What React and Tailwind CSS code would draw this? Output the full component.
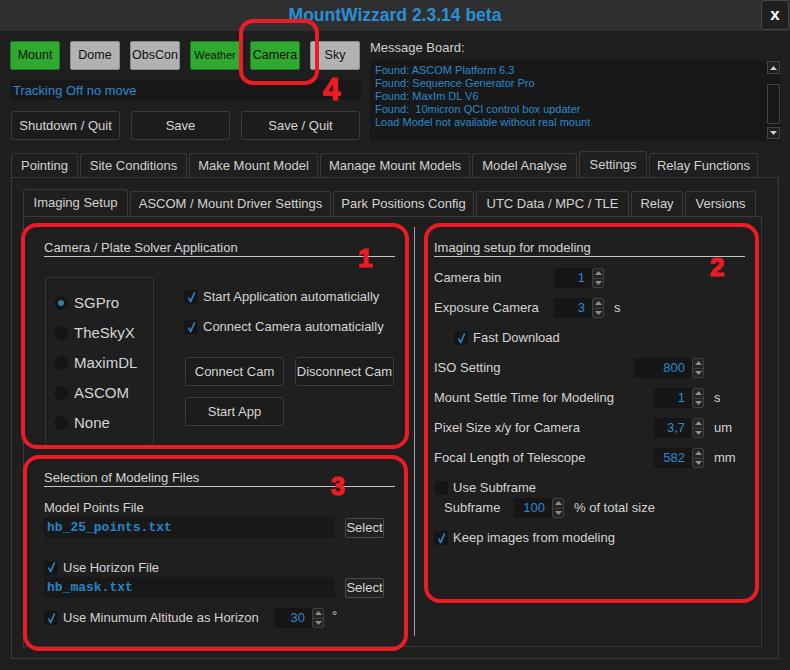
import React from "react";

const F = "font-['Liberation_Sans',Arial,sans-serif]";

function CheckMark() {
  return (
    <svg width="9" height="11" viewBox="0 0 9 11">
      <path d="M1.8 6.2 L3.6 9.6 L7.4 1" stroke="#2a86c8" strokeWidth="1.7" fill="none" strokeLinecap="round" strokeLinejoin="round" />
    </svg>
  );
}

function Check({ checked = true }) {
  return (
    <div className="w-[14px] h-[14px] shrink-0 bg-[#151515] rounded-[2px] flex items-center justify-center">
      {checked && <CheckMark />}
    </div>
  );
}

function CheckRow({ text, className = "" }) {
  return (
    <div className={`flex items-center h-[20px] ${className}`}>
      <Check />
      <span className="ml-[5px] text-[13px] leading-[16px] text-[#d4d4d4] whitespace-nowrap">{text}</span>
    </div>
  );
}

function Arrows() {
  return (
    <div className="w-[12px] h-full shrink-0 border border-[#404040] rounded-[2px] bg-[#242424] flex flex-col">
      <div className="flex-1 flex items-center justify-center border-b border-[#404040]">
        <svg width="7" height="4" viewBox="0 0 7 4">
          <path d="M0 4 L3.5 0 L7 4 Z" fill="#8e8e8e" />
        </svg>
      </div>
      <div className="flex-1 flex items-center justify-center">
        <svg width="7" height="4" viewBox="0 0 7 4">
          <path d="M0 0 L3.5 4 L7 0 Z" fill="#8e8e8e" />
        </svg>
      </div>
    </div>
  );
}

function Spin({ value, w }) {
  return (
    <div className={`flex h-[20px] shrink-0 rounded-[3px] bg-[#161616] ${w}`}>
      <div className="flex-1 text-right pr-[7px] text-[#2a8ad0] text-[13px] leading-[20px]">{value}</div>
      <Arrows />
    </div>
  );
}

function Radio({ label, selected }) {
  return (
    <div className="h-[30px] flex items-center">
      <div className="w-[14px] h-[14px] rounded-full bg-[#151515] flex items-center justify-center">
        {selected && <div className="w-[6px] h-[6px] rounded-full bg-[#2a7fae]" />}
      </div>
      <span className="ml-[6px] text-[15px] text-[#d4d4d4]">{label}</span>
    </div>
  );
}

function Header({ children }) {
  return (
    <div className="border-b border-[#c4c4c4] text-[13px] leading-[16px] text-[#d4d4d4] whitespace-nowrap">{children}</div>
  );
}

function DarkBtn({ children, w, className = "" }) {
  return (
    <div className={`h-[29px] ${w} bg-[#1c1c1c] border border-[#3c3c3c] rounded-[3px] flex items-center justify-center pt-[1px] text-[13px] text-[#d6d6d6] whitespace-nowrap ${className}`}>
      {children}
    </div>
  );
}

function TopBtn({ children, green, small }) {
  return (
    <div
      className={`w-[50px] h-[29px] rounded-[2px] border flex items-center justify-center text-[#111] ${
        small ? "text-[11px]" : "text-[12.5px]"
      } ${green ? "bg-[#2fa92f] border-[#1f7a1f]" : "bg-[#b2b2b2] border-[#8a8a8a]"}`}
    >
      {children}
    </div>
  );
}

function Tab({ children, w, active }) {
  return (
    <div
      className={`${w} ${active ? "h-[26px]" : "h-[24px]"} border border-b-0 border-[#3a3a3a] rounded-t-[3px] bg-[#1f1f1f] flex items-center justify-center text-[13px] text-[#d2d2d2] whitespace-nowrap`}
    >
      {children}
    </div>
  );
}

function SubTab({ children, w, active }) {
  return (
    <div
      className={`${w} ${active ? "h-[27px]" : "h-[25px]"} border border-b-0 border-[#3a3a3a] rounded-t-[3px] bg-[#1f1f1f] flex items-center justify-center text-[13px] text-[#d2d2d2] whitespace-nowrap`}
    >
      {children}
    </div>
  );
}

function FileInput({ text }) {
  return (
    <div className="h-[21px] w-[291px] bg-[#181818] rounded-[2px] pl-[3px] font-['Liberation_Mono',monospace] font-bold text-[13px] leading-[21px] text-[#2585c4]">
      {text}
    </div>
  );
}

function SelectBtn() {
  return (
    <div className="ml-[10px] mt-[1px] w-[39px] h-[20px] bg-[#222] border border-[#4a4a4a] rounded-[2px] flex items-center justify-center text-[13px] text-[#d8d8d8]">
      Select
    </div>
  );
}

const digit = "absolute font-bold leading-none text-[#ed1c24] [-webkit-text-stroke:1.2px_#ed1c24]";

export default function App() {
  return (
    <div className={`w-[790px] h-[670px] bg-[#1f1f1f] relative overflow-hidden ${F} text-[#d4d4d4]`}>
      {/* Title bar */}
      <div className="h-[31px] bg-[#2f2f2f] grid grid-cols-[1fr_auto_1fr] items-start">
        <div />
        <div className="text-[17.5px] font-bold text-[#2a8fd6] leading-[31px]">MountWizzard 2.3.14 beta</div>
        <div className="flex justify-end pr-[1px]">
          <div className="w-[28px] h-[30px] bg-[#1f1f1f] border border-[#454545] rounded-[3px] flex items-center justify-center text-white font-bold text-[17px] leading-none pb-[2px]">
            x
          </div>
        </div>
      </div>

      {/* Top section */}
      <div className="flex pl-[10px]">
        <div className="w-[351px] flex flex-col">
          <div className="flex gap-[10px] mt-[10px]">
            <TopBtn green>Mount</TopBtn>
            <TopBtn>Dome</TopBtn>
            <TopBtn>ObsCon</TopBtn>
            <TopBtn green small>Weather</TopBtn>
            <TopBtn green>Camera</TopBtn>
            <TopBtn>Sky</TopBtn>
          </div>
          <div className="mt-[10px] h-[20px] bg-[#181818] rounded-[2px] pl-[3px] pt-[1px] text-[13px] leading-[20px] text-[#2a8ad0]">
            Tracking Off no move
          </div>
          <div className="flex mt-[11px] ml-[1px] gap-[11px]">
            <DarkBtn w="w-[109px]">Shutdown / Quit</DarkBtn>
            <DarkBtn w="w-[99px]">Save</DarkBtn>
            <DarkBtn w="w-[119px]">Save / Quit</DarkBtn>
          </div>
        </div>
        <div className="ml-[9px] w-[411px] flex flex-col pt-[9px]">
          <div className="text-[13px] leading-[16px] text-[#d0d0d0]">Message Board:</div>
          <div className="mt-[4px] h-[81px] bg-[#181818] flex">
            <div className="flex-1 pl-[5px] pt-[4px] text-[11px] leading-[13px] text-[#2a8acb] whitespace-nowrap">
              <div>Found: ASCOM Platform 6.3</div>
              <div>Found: Sequence Generator Pro</div>
              <div>Found: MaxIm DL V6</div>
              <div>Found:&nbsp; 10micron QCI control box updater</div>
              <div>Load Model not available without real mount</div>
            </div>
            <div className="w-[13px] mr-[1px] flex flex-col">
              <div className="mt-[1px] h-[13px] border border-[#444] bg-[#202020] flex items-center justify-center">
                <svg width="7" height="4" viewBox="0 0 7 4">
                  <path d="M0 4 L3.5 0 L7 4 Z" fill="#cfcfcf" />
                </svg>
              </div>
              <div className="mt-[10px] h-[40px] border border-[#444] rounded-[1px]" />
              <div className="mt-[3px] h-[12px] border border-[#444] bg-[#202020] flex items-center justify-center">
                <svg width="7" height="4" viewBox="0 0 7 4">
                  <path d="M0 0 L3.5 4 L7 0 Z" fill="#cfcfcf" />
                </svg>
              </div>
            </div>
          </div>
        </div>
      </div>

      {/* Main tabs */}
      <div className="mt-[10px] ml-[11px] flex items-end gap-[2px] h-[26px]">
        <Tab w="w-[67px]">Pointing</Tab>
        <Tab w="w-[107px]">Site Conditions</Tab>
        <Tab w="w-[129px]">Make Mount Model</Tab>
        <Tab w="w-[150px]">Manage Mount Models</Tab>
        <Tab w="w-[105px]">Model Analyse</Tab>
        <Tab w="w-[68px]" active>Settings</Tab>
        <Tab w="w-[109px]">Relay Functions</Tab>
      </div>

      {/* Main pane */}
      <div className="ml-[11px] w-[768px] h-[482px] border border-[#3a3a3a] px-[11px] pt-[11px]">
        <div className="flex items-end gap-[2px] h-[27px]">
          <SubTab w="w-[105px]" active>Imaging Setup</SubTab>
          <SubTab w="w-[201px]">ASCOM / Mount Driver Settings</SubTab>
          <SubTab w="w-[141px]">Park Positions Config</SubTab>
          <SubTab w="w-[153px]">UTC Data / MPC / TLE</SubTab>
          <SubTab w="w-[52px]">Relay</SubTab>
          <SubTab w="w-[71px]">Versions</SubTab>
        </div>

        <div className="w-[739px] h-[431px] border border-[#3a3a3a] flex">
          {/* Left column */}
          <div className="w-[390px] pl-[20px] pr-[19px] pt-[23px] flex flex-col">
            <Header>Camera / Plate Solver Application</Header>
            <div className="flex mt-[20px]">
              <div className="ml-[1px] w-[109px] h-[169px] border border-[#353535] rounded-[3px] pt-[10px] pl-[8px] flex flex-col">
                <Radio label="SGPro" selected />
                <Radio label="TheSkyX" />
                <Radio label="MaximDL" />
                <Radio label="ASCOM" />
                <Radio label="None" />
              </div>
              <div className="ml-[30px] flex flex-col pt-[10px]">
                <CheckRow text="Start Application automaticially" />
                <CheckRow text="Connect Camera automaticially" className="mt-[10px]" />
                <div className="flex gap-[11px] ml-[1px] mt-[20px]">
                  <DarkBtn w="w-[99px]">Connect Cam</DarkBtn>
                  <DarkBtn w="w-[99px]">Disconnect Cam</DarkBtn>
                </div>
                <div className="flex ml-[1px] mt-[11px]">
                  <DarkBtn w="w-[99px]">Start App</DarkBtn>
                </div>
              </div>
            </div>

            <div className="mt-[24px]">
              <Header>Selection of Modeling Files</Header>
            </div>
            <div className="mt-[13px] text-[13px] leading-[16px]">Model Points File</div>
            <div className="flex mt-[1px]">
              <FileInput text="hb_25_points.txt" />
              <SelectBtn />
            </div>
            <div className="mt-[20px] flex items-center h-[19px]">
              <Check />
              <span className="ml-[5px] text-[13px] leading-[16px]">Use Horizon File</span>
            </div>
            <div className="flex">
              <FileInput text="hb_mask.txt" />
              <SelectBtn />
            </div>
            <div className="mt-[10px] flex items-center h-[20px]">
              <div className="w-[230px] flex items-center">
                <Check />
                <span className="ml-[5px] text-[13px] leading-[16px] whitespace-nowrap">Use Minumum Altitude as Horizon</span>
              </div>
              <Spin value="30" w="w-[50px]" />
              <span className="ml-[8px] text-[13px] leading-[16px] self-start">°</span>
            </div>
          </div>

          {/* Divider */}
          <div className="w-px bg-[#a0a0a0] my-[10px]" />

          {/* Right column */}
          <div className="flex-1 pl-[19px] pr-[16px] pt-[23px] flex flex-col text-[13px]">
            <Header>Imaging setup for modeling</Header>
            <div className="mt-[11px] flex items-center h-[20px]">
              <span className="w-[120px]">Camera bin</span>
              <Spin value="1" w="w-[50px]" />
            </div>
            <div className="mt-[10px] flex items-center h-[20px]">
              <span className="w-[120px]">Exposure Camera</span>
              <Spin value="3" w="w-[50px]" />
              <span className="ml-[10px]">s</span>
            </div>
            <div className="mt-[10px] flex items-center h-[20px] ml-[20px]">
              <Check />
              <span className="ml-[5px]">Fast Download</span>
            </div>
            <div className="mt-[10px] flex items-center h-[20px]">
              <span className="w-[200px]">ISO Setting</span>
              <Spin value="800" w="w-[70px]" />
            </div>
            <div className="mt-[10px] flex items-center h-[20px]">
              <span className="w-[220px]">Mount Settle Time for Modeling</span>
              <Spin value="1" w="w-[50px]" />
              <span className="ml-[10px]">s</span>
            </div>
            <div className="mt-[10px] flex items-center h-[20px]">
              <span className="w-[220px]">Pixel Size x/y for Camera</span>
              <Spin value="3,7" w="w-[50px]" />
              <span className="ml-[10px]">um</span>
            </div>
            <div className="mt-[10px] flex items-center h-[20px]">
              <span className="w-[220px]">Focal Length of Telescope</span>
              <Spin value="582" w="w-[50px]" />
              <span className="ml-[10px]">mm</span>
            </div>
            <div className="mt-[10px] flex items-center h-[20px]">
              <Check checked={false} />
              <span className="ml-[5px]">Use Subframe</span>
            </div>
            <div className="flex items-center h-[20px] ml-[10px]">
              <span className="w-[70px]">Subframe</span>
              <Spin value="100" w="w-[50px]" />
              <span className="ml-[10px]">% of total size</span>
            </div>
            <div className="mt-[10px] flex items-center h-[20px]">
              <Check />
              <span className="ml-[5px]">Keep images from modeling</span>
            </div>
          </div>
        </div>
      </div>

      {/* Red annotation overlays */}
      <div className="absolute left-[239px] top-[19px] w-[80px] h-[66px] border-[4px] border-[#ed1c24] rounded-[14px] pointer-events-none" />
      <div className="absolute left-[21px] top-[223px] w-[388px] h-[226px] border-[4px] border-[#ed1c24] rounded-[16px] pointer-events-none" />
      <div className="absolute left-[424px] top-[223px] w-[335px] h-[380px] border-[4px] border-[#ed1c24] rounded-[16px] pointer-events-none" />
      <div className="absolute left-[23px] top-[455px] w-[385px] h-[196px] border-[4px] border-[#ed1c24] rounded-[16px] pointer-events-none" />
      <div className={`${digit} left-[323px] top-[74px] text-[31px]`}>4</div>
      <div className={`${digit} left-[358px] top-[245px] text-[26px]`}>1</div>
      <div className={`${digit} left-[710px] top-[254px] text-[26px]`}>2</div>
      <div className={`${digit} left-[331px] top-[474px] text-[25px]`}>3</div>
    </div>
  );
}
